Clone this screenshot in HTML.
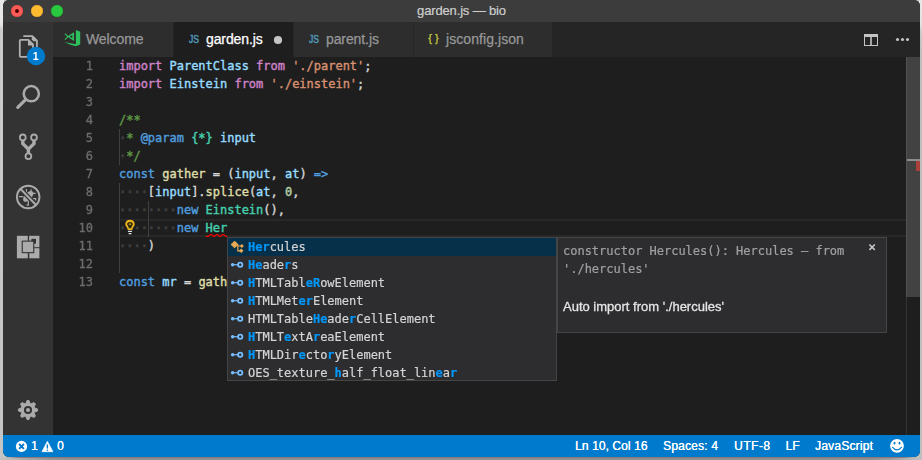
<!DOCTYPE html>
<html lang="en">
<head>
<meta charset="utf-8">
<title>garden.js — bio</title>
<style>
*{box-sizing:border-box;margin:0;padding:0}
html,body{width:922px;height:460px;overflow:hidden}
body{background:#c4c4c4;position:relative;font-family:"Liberation Sans",sans-serif}
.bgl{position:absolute;left:0;top:0;width:4px;height:460px;background:linear-gradient(#e9e9e9 0,#e6e6e6 24px,#cbcbcb 30px,#c4c4c4 100%)}
.bgr{position:absolute;left:919px;top:0;width:3px;height:460px;background:linear-gradient(#e8e8e8 0,#e2e2e2 24px,#c8c8c8 34px,#bebebe 60px,#bebebe 100%)}
.bgb{position:absolute;left:0;top:457px;width:922px;height:3px;background:linear-gradient(to right,#c3c3c3 0,#bcbcbc 8px,#a6a6a6 28px,#939393 52px,#8f8f8f 70px,#8f8f8f 872px,#9c9c9c 890px,#b4b4b4 908px,#c0c0c0 922px)}
.bgb:before{content:"";position:absolute;left:7px;top:0;width:908px;height:1px;background:linear-gradient(to right,rgba(133,120,112,0) 0,rgba(133,120,112,.9) 12px,rgba(133,120,112,.9) 896px,rgba(133,120,112,0) 908px)}
.win{position:absolute;left:3px;top:0;width:917px;height:457px;border-radius:6px 6px 6px 6px;overflow:hidden;background:#1e1e1e}
.title{position:absolute;left:0;top:0;width:917px;height:22px;background:#3c3c3c;color:#cfcfcf;font-size:13px;line-height:22px;text-align:center;letter-spacing:-0.15px;-webkit-text-stroke:.2px #cfcfcf}
.tl{position:absolute;top:5px;width:12px;height:12px;border-radius:50%}
.act{position:absolute;left:0;top:22px;width:50px;height:413px;background:#333333}
.tabs{position:absolute;left:50px;top:22px;width:867px;height:35px;background:#252526}
.tab{position:absolute;top:0;height:35px;background:#2d2d2d;border-right:1px solid #252526;color:#979797;font-size:14px;line-height:35px;white-space:nowrap;letter-spacing:-0.1px}
.tab .lb{-webkit-text-stroke:.25px currentColor}
.tab.on{background:#1e1e1e;color:#ffffff}
.tab .ic{position:absolute;left:15px;top:0;width:11px;font-size:10px;color:#519aba;letter-spacing:0;text-align:center;-webkit-text-stroke:.45px currentColor}
.tab .ic i{display:inline-block;font-style:normal;transform:scaleX(.85);transform-origin:50% 50%}
.tab .lb{position:absolute;left:33px;top:0}
.editor{position:absolute;left:50px;top:57px;width:867px;height:378px;background:#1e1e1e;font-family:"DejaVu Sans Mono","Liberation Mono",monospace;font-size:12px;line-height:18px;color:#d4d4d4;letter-spacing:-0.012px}
.ln{position:absolute;left:0;width:40px;text-align:right;color:#6c6c6c;height:18px;-webkit-text-stroke:.3px #6c6c6c;will-change:transform}
.cl{position:absolute;left:66px;height:18px;white-space:pre;-webkit-text-stroke:.4px currentColor}
.curline{position:absolute;left:66px;top:162px;width:787px;height:18px;border:2px solid #282828;border-left:0;border-right:0}
.ig{position:absolute;width:1px;background:#404040}
.sb{position:absolute;left:853px;top:0;width:14px;height:378px;border-left:1px solid #333333}
.sb .sl{position:absolute;left:-1px;top:0;width:14px;height:240px;background:#424242;border-left:1px solid #515454}
.sb .cur{position:absolute;left:0;top:102px;width:13px;height:2px;background:#8c8c8c}
.sb .err{position:absolute;left:9px;top:104px;width:4px;height:10px;background:#a9403a}
.status{position:absolute;left:0;top:435px;width:917px;height:22px;background:#007acc;color:#fff;font-size:12px;line-height:22px;text-shadow:.3px 0 0 #fff}
.status span{position:absolute;top:0;white-space:nowrap}
.k{color:#cf82c9}.v{color:#96dcff}.s{color:#d68f70}.c{color:#5f9547}.b{color:#4f9cde}.t{color:#45cfae}.f{color:#dedca6}.n{color:#b5cea8}.w{position:relative;color:#3e3e3e;font-weight:bold}
.w:before{position:absolute;left:0;top:-2px;line-height:18px;white-space:pre}
.w1:before{content:"\00b7"}.w4:before{content:"\00b7\00b7\00b7\00b7"}.w8:before{content:"\00b7\00b7\00b7\00b7\00b7\00b7\00b7\00b7"}
.sug{will-change:transform;position:absolute;left:174px;top:180px;width:330px;height:144px;background:#2d2d30;border:1px solid #454545;overflow:hidden}
.row{position:absolute;left:0;width:328px;height:18px;white-space:pre}
.row.sel{background:#062f4a}
.row .tx{position:absolute;left:20px;top:0;-webkit-text-stroke:.2px currentColor}
.row b{color:#0097fb;font-weight:bold}
.det{will-change:transform;position:absolute;left:504px;top:180px;width:330px;height:96px;background:#2d2d30;border:1px solid #454545}
.det .sig{position:absolute;left:5px;top:4px;width:300px;color:#a0a0a1;white-space:pre;line-height:18px;-webkit-text-stroke:.2px currentColor}
.det .doc{position:absolute;left:5px;top:60px;font-family:"Liberation Sans",sans-serif;font-size:13px;line-height:18px;color:#e4e4e4;letter-spacing:0;white-space:nowrap;-webkit-text-stroke:.3px #e4e4e4}
svg.ov{position:absolute;left:-3px;top:0;pointer-events:none}
</style>
</head>
<body>
<div class="bgl"></div><div class="bgr"></div><div class="bgb"></div>
<div class="win">
  <div class="title">garden.js — bio
    <div class="tl" style="left:8px;background:#fc5b57;box-shadow:inset 0 0 0 .5px #df4744"></div>
    <div class="tl" style="left:28px;background:#febc2e;box-shadow:inset 0 0 0 .5px #dea032"></div>
    <div class="tl" style="left:48px;background:#29c940;box-shadow:inset 0 0 0 .5px #1fa930"></div>
  </div>
  <div class="act"></div>
  <div class="tabs">
    <div class="tab" style="left:0;width:121px"><span class="lb">Welcome</span></div>
    <div class="tab on" style="left:121px;width:120px"><span class="ic" style="left:14px"><i>JS</i></span><span class="lb" style="left:32px">garden.js</span></div>
    <div class="tab" style="left:241px;width:120px"><span class="ic" style="left:14px"><i>JS</i></span><span class="lb" style="left:32px">parent.js</span></div>
    <div class="tab" style="left:361px;width:139px"><span class="ic" style="left:12.5px;width:14px;color:#cbcb41;font-size:11px;top:-1px;-webkit-text-stroke:.25px #cbcb41"><i style="transform:none;letter-spacing:3.2px;margin-right:-3.2px">{}</i></span><span class="lb" style="left:32px;letter-spacing:.07px">jsconfig.json</span></div>
  </div>
  <div class="editor">
    <div class="curline"></div>
    <div class="ig" style="left:66px;top:72px;height:36px"></div>
    <div class="ig" style="left:66px;top:126px;height:90px"></div>
    <div class="ig" style="left:95px;top:144px;height:36px"></div>
    <div class="ln" style="top:0">1</div><div class="cl" style="top:0"><span class="k">import</span> <span class="v">ParentClass</span> <span class="k">from</span> <span class="s">'./parent'</span>;</div>
    <div class="ln" style="top:18px">2</div><div class="cl" style="top:18px"><span class="k">import</span> <span class="v">Einstein</span> <span class="k">from</span> <span class="s">'./einstein'</span>;</div>
    <div class="ln" style="top:36px">3</div>
    <div class="ln" style="top:54px">4</div><div class="cl" style="top:54px"><span class="c">/**</span></div>
    <div class="ln" style="top:72px">5</div><div class="cl" style="top:72px"><span class="w w1"> </span><span class="c">* </span><span class="b">@param</span><span class="c"> </span><span class="t">{*}</span><span class="c"> </span><span class="v">input</span></div>
    <div class="ln" style="top:90px">6</div><div class="cl" style="top:90px"><span class="w w1"> </span><span class="c">*/</span></div>
    <div class="ln" style="top:108px">7</div><div class="cl" style="top:108px"><span class="b">const</span> <span class="f">gather</span> = (<span class="v">input</span>, <span class="v">at</span>) <span class="b">=&gt;</span></div>
    <div class="ln" style="top:126px">8</div><div class="cl" style="top:126px"><span class="w w4">    </span>[<span class="v">input</span>].<span class="f">splice</span>(<span class="v">at</span>, <span class="n">0</span>,</div>
    <div class="ln" style="top:144px">9</div><div class="cl" style="top:144px"><span class="w w8">        </span><span class="b">new</span> <span class="t">Einstein</span>(),</div>
    <div class="ln" style="top:162px">10</div><div class="cl" style="top:162px"><span class="w w8">        </span><span class="b">new</span> <span class="t">Her</span></div>
    <div class="ln" style="top:180px">11</div><div class="cl" style="top:180px"><span class="w w4">    </span>)</div>
    <div class="ln" style="top:198px">12</div>
    <div class="ln" style="top:216px">13</div><div class="cl" style="top:216px"><span class="b">const</span> <span class="v">mr</span> = <span class="f">gath</span></div>
    <div class="sb"><div class="sl"></div><div class="cur"></div><div class="err"></div></div>
    <div class="sug">
      <div class="row sel" style="top:0"><span class="tx"><b>Her</b>cules</span></div>
      <div class="row" style="top:18px"><span class="tx"><b>He</b>ade<b>r</b>s</span></div>
      <div class="row" style="top:36px"><span class="tx"><b>H</b>TMLTabl<b>eR</b>owElement</span></div>
      <div class="row" style="top:54px"><span class="tx"><b>H</b>TMLMet<b>er</b>Element</span></div>
      <div class="row" style="top:72px"><span class="tx">HTMLTable<b>He</b>ade<b>r</b>CellElement</span></div>
      <div class="row" style="top:90px"><span class="tx"><b>H</b>TMLT<b>e</b>xtA<b>r</b>eaElement</span></div>
      <div class="row" style="top:108px"><span class="tx"><b>H</b>TMLDir<b>e</b>cto<b>r</b>yElement</span></div>
      <div class="row" style="top:126px"><span class="tx">OES_texture_<b>h</b>alf_float_lin<b>e</b>a<b>r</b></span></div>
    </div>
    <div class="det">
      <div class="sig">constructor Hercules(): Hercules — from
'./hercules'</div>
      <div class="doc">Auto import from './hercules'</div>
    </div>
  </div>
  <div class="status">
    <span style="left:28px">1</span><span style="left:54px">0</span>
    <span style="left:572px;letter-spacing:.08px">Ln 10, Col 16</span><span style="left:660px;letter-spacing:.18px">Spaces: 4</span><span style="left:731px;letter-spacing:.5px">UTF-8</span><span style="left:782.5px">LF</span><span style="left:812px;letter-spacing:.2px">JavaScript</span>
  </div>
  <svg class="ov" width="922" height="460" viewBox="0 0 922 460">
    <!-- traffic light dirty dot -->
    <circle cx="17" cy="11" r="2" fill="#4d0000"/>
    <!-- files icon -->
    <g fill="none" stroke="#b0b0b0" stroke-width="1.8" stroke-linejoin="round" stroke-linecap="round">
      <path d="M20.6 39.9 H28.4 L33 44.5 V56.1 Q33 56.9 32.2 56.9 H20.6 Q19.8 56.9 19.8 56.1 V40.7 Q19.8 39.9 20.6 39.9 Z"/>
      <path d="M24 36.1 H32.4 L36.9 40.6 V53"/>
    </g>
    <path d="M28 39.6 V45.4 H33.6 Z" fill="#b0b0b0"/>
    <path d="M31.8 35.6 V39.2 L33.4 41.2 H37.6 Z" fill="#b0b0b0"/>
    <circle cx="36" cy="56" r="9.2" fill="#007acc"/>
    <text x="35.7" y="59.8" style="font-family:'Liberation Sans',sans-serif;font-size:10.5px;font-weight:bold" fill="#ffffff" text-anchor="middle">1</text>
    <!-- search -->
    <circle cx="31.3" cy="93.7" r="7.6" fill="none" stroke="#ababab" stroke-width="2.5"/>
    <path d="M25.6 99.6 L17.8 107.4" stroke="#ababab" stroke-width="3.2" stroke-linecap="round"/>
    <!-- git -->
    <g fill="none" stroke="#ababab">
      <circle cx="22.8" cy="137.4" r="2.9" stroke-width="1.8"/>
      <circle cx="34" cy="137.4" r="2.9" stroke-width="1.8"/>
      <circle cx="28.4" cy="156.3" r="2.9" stroke-width="1.8"/>
      <path d="M22.8 140.6 V143.6 L28.4 149.2 L34 143.6 V140.6 M28.4 148 V153.2" stroke-width="3.4"/>
    </g>
    <!-- debug -->
    <g>
      <ellipse cx="28.2" cy="196.4" rx="3.5" ry="6.6" transform="rotate(42 28.2 196.4)" fill="#ababab"/>
      <g fill="none" stroke="#ababab" stroke-width="1.2">
        <path d="M19 196.6 H23.4 M28.3 201 V205.2 H26.6 M31.8 193.4 H35.6 M32.6 198.6 H35.6 V200.6 M26.4 189 V192.4 M31.4 189.4 L30.4 192.4"/>
      </g>
      <path d="M21.6 190 L35 204" stroke="#333333" stroke-width="4.6"/>
      <path d="M20.4 188.8 L36 205" stroke="#ababab" stroke-width="2"/>
      <circle cx="28.2" cy="197" r="11.3" fill="none" stroke="#ababab" stroke-width="1.9"/>
    </g>
    <!-- extensions -->
    <g>
      <rect x="16.9" y="235.8" width="10.9" height="22.5" fill="#ababab"/>
      <rect x="29.1" y="235.8" width="10.3" height="11.4" fill="#ababab"/>
      <rect x="29.3" y="248.2" width="10.1" height="10.1" fill="#ababab"/>
      <rect x="31.4" y="238.8" width="4.6" height="4.8" fill="#333333"/>
      <rect x="21.7" y="240.6" width="12.6" height="12.6" fill="#333333"/>
      <rect x="22.8" y="241.7" width="10.4" height="10.4" fill="#ababab"/>
    </g>
    <!-- gear -->
    <g transform="translate(28 410)">
      <path fill="#ababab" stroke="#ababab" stroke-width="1" stroke-linejoin="round" d="M-2.23 -6.32 L-0.96 -9.55 L0.96 -9.55 L2.23 -6.32 L2.89 -6.05 L6.08 -7.43 L7.43 -6.08 L6.05 -2.89 L6.32 -2.23 L9.55 -0.96 L9.55 0.96 L6.32 2.23 L6.05 2.89 L7.43 6.08 L6.08 7.43 L2.89 6.05 L2.23 6.32 L0.96 9.55 L-0.96 9.55 L-2.23 6.32 L-2.89 6.05 L-6.08 7.43 L-7.43 6.08 L-6.05 2.89 L-6.32 2.23 L-9.55 0.96 L-9.55 -0.96 L-6.32 -2.23 L-6.05 -2.89 L-7.43 -6.08 L-6.08 -7.43 L-2.89 -6.05 Z"/>
      <circle r="3.05" fill="none" stroke="#333333" stroke-width="2"/>
    </g>
    <!-- vscode logo in Welcome tab -->
    <g fill="#2fc05e">
      <path d="M75.9 30 L80.2 31.8 V44.4 L75.9 46.2 Z"/>
      <path d="M64.2 42 L76 44.2 V46.2 L70.5 44.8 Z"/>
      <path d="M74 32.2 V41 L67.2 36.6 Z"/>
    </g>
    <path d="M72.3 34.9 V38.3 L69.7 36.6 Z" fill="#2d2d2d"/>
    <path d="M64.9 33.6 L68 36.6 L64.9 39.6" fill="none" stroke="#2fc05e" stroke-width="1.1"/>
    <!-- dirty dot -->
    <circle cx="278" cy="40" r="4.1" fill="#c5c5c5"/>
    <!-- split editor -->
    <g>
      <rect x="864.5" y="34.5" width="13" height="11" fill="none" stroke="#c5c5c5" stroke-width="1"/>
      <rect x="864" y="34" width="14" height="3" fill="#c5c5c5"/>
      <rect x="870.2" y="34" width="1.6" height="12" fill="#c5c5c5"/>
    </g>
    <g fill="#c5c5c5">
      <circle cx="897.5" cy="39.5" r="1.55"/><circle cx="902.5" cy="39.5" r="1.55"/><circle cx="907.5" cy="39.5" r="1.55"/>
    </g>
    <!-- lightbulb -->
    <g>
      <path d="M130 219.8 C127 219.8 125.3 221.8 125.3 224 C125.3 225.7 126.3 226.7 127.1 227.9 C127.5 228.6 127.7 229.2 127.7 230 H132.3 C132.3 229.2 132.5 228.6 132.9 227.9 C133.7 226.7 134.7 225.7 134.7 224 C134.7 221.8 133 219.8 130 219.8 Z" fill="#e8b31c"/>
      <path d="M130 221.9 C128 221.9 127.2 222.9 127.2 224 C127.2 225.2 128.3 226.2 128.9 228.2 H131.1 C131.7 226.2 132.8 225.2 132.8 224 C132.8 222.9 132 221.9 130 221.9 Z" fill="#2e2a12"/>
      <rect x="128.8" y="223.6" width="2.4" height="1.2" rx=".6" fill="#e8b31c"/>
      <rect x="127.9" y="230.8" width="4.2" height="1.3" rx=".6" fill="#e4e4e4"/>
      <rect x="128.5" y="233" width="3" height="1.3" rx=".6" fill="#e4e4e4"/>
    </g>
    <!-- squiggle -->
    <path d="M205.8 236.3 L208.4 236.3 L210.4 234.5 L211.5 234.5 L213.5 236.3 L214.5 236.3 L216.5 234.5 L217.6 234.5 L219.6 236.3 L220.6 236.3 L222.6 234.5 L223.7 234.5 L225.7 236.3 L227.2 236.3" fill="none" stroke="#f40000" stroke-width="1.2"/>
    <!-- suggest icons -->
    <g fill="#e8ab53">
      <path d="M234.6 240.7 L238.6 244.5 L234.6 248.3 L230.6 244.5 Z"/>
      <path d="M241.8 243.9 L243.9 246 L241.8 248.1 L239.7 246 Z"/>
      <path d="M241.2 248.5 L243.5 250.8 L241.2 253.1 L238.9 250.8 Z"/>
      <path d="M237.2 245 H238.4 V250.2 H240 V251.4 H237.2 Z M238 245.4 H240.4 V246.6 H238 Z"/>
    </g>
    <g fill="none" stroke="#75beff">
      <circle cx="232.6" cy="264.7" r="1.7" fill="#75beff" stroke="none"/>
      <path d="M233 264.7 H238" stroke-width="1.2"/>
      <circle cx="240.2" cy="264.7" r="2.15" stroke-width="1.8"/>
    </g>
    <g fill="none" stroke="#75beff">
      <circle cx="232.6" cy="282.7" r="1.7" fill="#75beff" stroke="none"/>
      <path d="M233 282.7 H238" stroke-width="1.2"/>
      <circle cx="240.2" cy="282.7" r="2.15" stroke-width="1.8"/>
    </g>
    <g fill="none" stroke="#75beff">
      <circle cx="232.6" cy="300.7" r="1.7" fill="#75beff" stroke="none"/>
      <path d="M233 300.7 H238" stroke-width="1.2"/>
      <circle cx="240.2" cy="300.7" r="2.15" stroke-width="1.8"/>
    </g>
    <g fill="none" stroke="#75beff">
      <circle cx="232.6" cy="318.7" r="1.7" fill="#75beff" stroke="none"/>
      <path d="M233 318.7 H238" stroke-width="1.2"/>
      <circle cx="240.2" cy="318.7" r="2.15" stroke-width="1.8"/>
    </g>
    <g fill="none" stroke="#75beff">
      <circle cx="232.6" cy="336.7" r="1.7" fill="#75beff" stroke="none"/>
      <path d="M233 336.7 H238" stroke-width="1.2"/>
      <circle cx="240.2" cy="336.7" r="2.15" stroke-width="1.8"/>
    </g>
    <g fill="none" stroke="#75beff">
      <circle cx="232.6" cy="354.7" r="1.7" fill="#75beff" stroke="none"/>
      <path d="M233 354.7 H238" stroke-width="1.2"/>
      <circle cx="240.2" cy="354.7" r="2.15" stroke-width="1.8"/>
    </g>
    <g fill="none" stroke="#75beff">
      <circle cx="232.6" cy="372.7" r="1.7" fill="#75beff" stroke="none"/>
      <path d="M233 372.7 H238" stroke-width="1.2"/>
      <circle cx="240.2" cy="372.7" r="2.15" stroke-width="1.8"/>
    </g>
    <!-- close x -->
    <path d="M869.4 244.5 L874.8 249.9 M874.8 244.5 L869.4 249.9" stroke="#c8c8c8" stroke-width="1.5"/>
    <!-- status icons -->
    <circle cx="21.5" cy="446.4" r="5.6" fill="#ffffff"/>
    <path d="M19.1 444 L23.9 448.8 M23.9 444 L19.1 448.8" stroke="#007acc" stroke-width="1.9"/>
    <path d="M47.4 441.2 L53 451.7 H41.9 Z" fill="#ffffff" stroke="#ffffff" stroke-width=".6" stroke-linejoin="round"/>
    <path d="M47.4 444.6 V448.4 M47.4 449.4 V450.8" stroke="#007acc" stroke-width="1.4"/>
    <circle cx="897" cy="445.8" r="6.9" fill="#ffffff"/>
    <ellipse cx="894.5" cy="443.2" rx=".9" ry="1.4" fill="#007acc"/>
    <ellipse cx="899.5" cy="443.2" rx=".9" ry="1.4" fill="#007acc"/>
    <path d="M892.6 447.4 Q897 452.4 901.4 447.4" fill="none" stroke="#007acc" stroke-width="1.2" stroke-linecap="round"/>
  </svg>
</div>
</body>
</html>
